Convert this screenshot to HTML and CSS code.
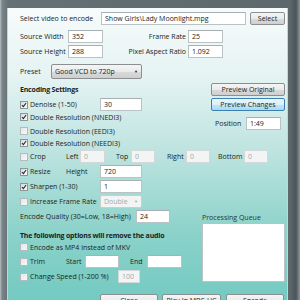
FILE: index.html
```html
<!DOCTYPE html>
<html>
<head>
<meta charset="utf-8">
<link rel="stylesheet" href="styles.css">
</head>
<body>
<div class="window">
  <div class="client">
    <div class="row r1">
      <span class="lbl w81">Select video to encode</span>
      <span class="tb w145">Show Girls\Lady Moonlight.mpg</span>
      <span class="btn select">Select</span>
    </div>
    <div class="row r2">
      <span class="lbl w48">Source Width</span>
      <span class="tb w35">352</span>
      <span class="lbl rlbl w85">Frame Rate</span>
      <span class="tb w35">25</span>
    </div>
    <div class="row r3">
      <span class="lbl w48">Source Height</span>
      <span class="tb w35">288</span>
      <span class="lbl rlbl w85">Pixel Aspect Ratio</span>
      <span class="tb w35">1.092</span>
    </div>
    <div class="row r4">
      <span class="lbl w31">Preset</span>
      <span class="combo w91">Good VCD to 720p<span class="arrow">&#9660;</span></span>
    </div>

    <div class="mid">
      <div class="mid-left">
        <div class="row h13"><span class="bold">Encoding Settings</span></div>
        <div class="row h13 m2">
          <span class="chk w80"><span class="cb on"><svg viewBox="0 0 8 8"><path d="M1.3 4.2 L3.2 6.2 L6.8 1.4"/></svg></span>Denoise (1-50)</span>
          <span class="tb w42">30</span>
        </div>
        <div class="row h10 m1">
          <span class="chk"><span class="cb on"><svg viewBox="0 0 8 8"><path d="M1.3 4.2 L3.2 6.2 L6.8 1.4"/></svg></span>Double Resolution (NNEDI3)</span>
        </div>
        <div class="row h10 m4">
          <span class="chk"><span class="cb dis"></span>Double Resolution (EEDI3)</span>
        </div>
        <div class="row h10 m2">
          <span class="chk"><span class="cb on"><svg viewBox="0 0 8 8"><path d="M1.3 4.2 L3.2 6.2 L6.8 1.4"/></svg></span>Double Resolution (NEEDI3)</span>
        </div>
      </div>
      <div class="mid-right">
        <span class="btn wide">Preview Original</span>
        <span class="btn wide hover">Preview Changes</span>
        <div class="row h12 pos">
          <span class="lbl w35 pl4">Position</span>
          <span class="tb w35">1:49</span>
        </div>
      </div>
    </div>

    <div class="row h13 m2">
      <span class="chk w46"><span class="cb dis"></span>Crop</span>
      <span class="lbl w14">Left</span>
      <span class="tb w25 off">0</span>
      <span class="lbl w26 pl11">Top</span>
      <span class="tb w24 off">0</span>
      <span class="lbl w31 pl12">Right</span>
      <span class="tb w24 off">0</span>
      <span class="lbl w34 pl8">Bottom</span>
      <span class="tb w24 off">0</span>
    </div>
    <div class="row h13 m2">
      <span class="chk w46"><span class="cb on"><svg viewBox="0 0 8 8"><path d="M1.3 4.2 L3.2 6.2 L6.8 1.4"/></svg></span>Resize</span>
      <span class="lbl w34">Height</span>
      <span class="tb w42">720</span>
    </div>
    <div class="row h13 m2">
      <span class="chk w80"><span class="cb on"><svg viewBox="0 0 8 8"><path d="M1.3 4.2 L3.2 6.2 L6.8 1.4"/></svg></span>Sharpen (1-30)</span>
      <span class="tb w42">1</span>
    </div>
    <div class="row h13 m2">
      <span class="chk w80"><span class="cb dis"></span>Increase Frame Rate</span>
      <span class="combo w42 off">Double<span class="arrow">&#9660;</span></span>
    </div>

    <div class="bottom">
      <div class="bottom-left">
        <div class="row h14">
          <span class="lbl w116">Encode Quality (30=Low, 18=High)</span>
          <span class="tb w34">24</span>
        </div>
        <div class="row h12 m6"><span class="bold">The following options will remove the audio</span></div>
        <div class="row h10 m1">
          <span class="chk"><span class="cb dis"></span>Encode as MP4 instead of MKV</span>
        </div>
        <div class="row h13 m3">
          <span class="chk w46"><span class="cb dis"></span>Trim</span>
          <span class="lbl w19">Start</span>
          <span class="tb w34"></span>
          <span class="lbl w28 pl11">End</span>
          <span class="tb w35"></span>
        </div>
        <div class="row h13 m2">
          <span class="chk w98"><span class="cb dis"></span>Change Speed (1-200 %)</span>
          <span class="tb w22 off">100</span>
        </div>
      </div>
      <div class="bottom-right">
        <div class="qlabel">Processing Queue</div>
        <div class="queue"></div>
      </div>
    </div>

    <div class="buttons">
      <span class="btn b58">Close</span>
      <span class="btn b59">Play In MPC-HC</span>
      <span class="btn b58 last">Encode</span>
    </div>
  </div>
</div>
</body>
</html>
```
FILE: styles.css
```css
html, body {
  margin: 0;
  padding: 0;
}
body {
  width: 300px;
  height: 300px;
  overflow: hidden;
  font-family: "Open Sans", "Noto Sans", sans-serif;
  font-size: 7px;
  color: #1a1e21;
}
.window {
  width: 300px;
  height: 300px;
  box-sizing: border-box;
  padding: 8px 12px 0 8px;
  background: linear-gradient(90deg, #b9c0c3 0, #7a8589 2px, #667175 8px, #5d686c 290px, #4b5458 296px, #8d979a 300px);
  overflow: hidden;
}
.client {
  height: 300px;
  box-sizing: border-box;
  padding: 4px 3px 0 12px;
  background: linear-gradient(180deg, #f7fbfb 0px, #e4f3f2 70px, #bae2de 150px, #8bd2ca 225px, #74cac1 292px);
  border-left: 1px solid #c9d3d4;
  border-right: 1px solid #c9d3d4;
  margin-left: -1px;
}
.row {
  display: flex;
  align-items: center;
  white-space: nowrap;
}
.r1 { height: 13px; }
.r2 { height: 13px; margin-top: 5px; }
.r3 { height: 13px; margin-top: 2px; }
.r4 { height: 15px; margin-top: 6px; }
.h10 { height: 10px; }
.h12 { height: 12px; }
.h13 { height: 13px; }
.h14 { height: 14px; }
.m1 { margin-top: 1px; }
.m2 { margin-top: 2px; }
.m3 { margin-top: 3px; }
.m4 { margin-top: 4px; }
.m6 { margin-top: 6px; }

.lbl { display: block; flex: none; }
.rlbl { text-align: right; padding-right: 2px; box-sizing: border-box; }
.pl4 { padding-left: 4px; }
.pl8 { padding-left: 8px; }
.pl11 { padding-left: 11px; }
.pl12 { padding-left: 12px; }
.w14 { width: 14px; }
.w19 { width: 19px; }
.w22 { width: 22px; }
.w24 { width: 24px; }
.w25 { width: 25px; }
.w26 { width: 26px; }
.w28 { width: 28px; }
.w31 { width: 31px; }
.w34 { width: 34px; }
.w35 { width: 35px; }
.w42 { width: 42px; }
.w46 { width: 46px; }
.w48 { width: 48px; }
.w80 { width: 80px; }
.w81 { width: 81px; }
.w85 { width: 85px; }
.w91 { width: 91px; }
.w98 { width: 98px; }
.w116 { width: 116px; }
.w145 { width: 145px; }
.lbl, .chk { box-sizing: border-box; }

.bold { font-weight: 700; letter-spacing: -0.2px; }

.tb {
  flex: none;
  display: block;
  box-sizing: border-box;
  height: 13px;
  line-height: 11px;
  background: #fff;
  border: 1px solid #b9c3c6;
  border-top-color: #a9b0b3;
  padding-left: 3px;
  color: #1a1e21;
  overflow: hidden;
}
.tb.off {
  background: #f3f5f5;
  color: #a4a9ab;
  border-color: #d3d8d9;
}

.btn {
  flex: none;
  display: block;
  box-sizing: border-box;
  height: 13px;
  line-height: 11px;
  text-align: center;
  border: 1px solid #8a8f92;
  border-radius: 2px;
  background: linear-gradient(180deg, #f5f5f5 0, #eaeaea 50%, #dadada 52%, #cfcfcf 100%);
  color: #1a1e21;
}
.select { width: 35px; margin-left: 4px; }
.wide { width: 74px; }
.hover {
  margin-top: 2px;
  border-color: #3c7fb1;
  background: linear-gradient(180deg, #eaf6fd 0, #d9f0fc 50%, #bee6fd 52%, #a7d9f5 100%);
}

.combo {
  flex: none;
  display: flex;
  align-items: center;
  box-sizing: border-box;
  height: 15px;
  padding-left: 3px;
  border: 1px solid #8a8f92;
  border-radius: 2px;
  background: linear-gradient(180deg, #f5f5f5 0, #eaeaea 50%, #dadada 52%, #cfcfcf 100%);
}
.combo .arrow {
  margin-left: auto;
  margin-right: 3px;
  font-size: 4px;
  color: #222;
}
.combo.off {
  height: 13px;
  background: #f3f5f5;
  border-color: #c9cfd1;
  color: #a4a9ab;
}
.combo.off .arrow { color: #a4a9ab; }

.chk {
  display: flex;
  align-items: center;
  flex: none;
}
.cb {
  flex: none;
  display: block;
  width: 8px;
  height: 8px;
  box-sizing: border-box;
  border: 1px solid #8e9699;
  background: linear-gradient(135deg, #d6dadb 0, #fbfbfb 100%);
  margin-right: 2px;
}
.cb svg {
  display: block;
  width: 6px;
  height: 6px;
}
.cb svg path {
  fill: none;
  stroke: #1c2a33;
  stroke-width: 1.4;
}
.cb.dis {
  border-color: #b4bbbd;
  background: linear-gradient(135deg, #e4e7e8 0, #f8f8f8 100%);
}

.mid {
  display: flex;
  margin-top: 4px;
}
.mid-left { width: 191px; flex: none; }
.mid-right { width: 74px; flex: none; }
.pos { margin-top: 6px; }

.bottom {
  display: flex;
  margin-top: 1px;
}
.bottom-left { width: 182px; flex: none; }
.bottom-right { width: 83px; flex: none; }
.qlabel {
  margin-top: 3px;
  height: 11px;
  line-height: 11px;
  color: #1f3a2e;
}
.queue {
  height: 59px;
  box-sizing: border-box;
  background: #fff;
  border: 1px solid #b9c3c6;
}

.buttons {
  display: flex;
  justify-content: flex-end;
  margin-top: 11px;
}
.b58 { width: 58px; height: 14px; }
.b59 { width: 59px; height: 14px; margin-left: 4px; }
.last { margin-left: 5px; }
```
